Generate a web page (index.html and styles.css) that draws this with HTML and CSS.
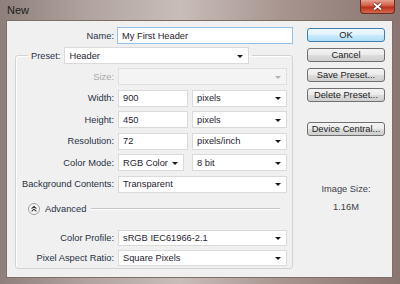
FILE: index.html
```html
<!DOCTYPE html>
<html lang="en">
<head>
    <meta charset="UTF-8">
    <title>New</title>
    <link rel="stylesheet" href="styles.css">
</head>
<body>
    <div class="window">
        <div class="titlebar">
            <span class="title">New</span>
            <button class="close">
                <svg width="11" height="9" viewBox="0 0 11 9"><path d="M2 1.5 L9 7.5 M9 1.5 L2 7.5" stroke="#5a2018" stroke-width="3.2"/><path d="M2 1.5 L9 7.5 M9 1.5 L2 7.5" stroke="#fff" stroke-width="1.8"/></svg>
            </button>
        </div>

        <div class="client">
            <div class="main">
                <div class="name-row">
                    <label>Name:</label>
                    <input class="field name-field" type="text" value="My First Header">
                </div>

                <fieldset class="group">
                    <legend>
                        <span>Preset:</span>
                        <div class="dropdown preset"><select><option>Header</option></select></div>
                    </legend>

                    <div class="rows">
                        <label class="disabled-label">Size:</label>
                        <div class="dropdown disabled"><select disabled><option></option></select></div>

                        <label>Width:</label>
                        <div class="pair">
                            <input class="field short" type="text" value="900">
                            <div class="dropdown unit"><select><option>pixels</option></select></div>
                        </div>

                        <label>Height:</label>
                        <div class="pair">
                            <input class="field short" type="text" value="450">
                            <div class="dropdown unit"><select><option>pixels</option></select></div>
                        </div>

                        <label>Resolution:</label>
                        <div class="pair">
                            <input class="field short" type="text" value="72">
                            <div class="dropdown unit"><select><option>pixels/inch</option></select></div>
                        </div>

                        <label>Color Mode:</label>
                        <div class="pair">
                            <div class="dropdown mode"><select><option>RGB Color</option></select></div>
                            <div class="dropdown unit"><select><option>8 bit</option></select></div>
                        </div>

                        <label>Background Contents:</label>
                        <div class="dropdown"><select><option>Transparent</option></select></div>
                    </div>

                    <div class="advanced">
                        <svg width="12" height="12" viewBox="0 0 12 12"><circle cx="6" cy="6" r="5.5" fill="#f6f6f6" stroke="#a0a0a0"/><path d="M3.6 5.6 L6 3.4 L8.4 5.6 M3.6 8.4 L6 6.2 L8.4 8.4" fill="none" stroke="#333" stroke-width="1.1"/></svg>
                        <span>Advanced</span>
                        <div class="rule"></div>
                    </div>

                    <div class="rows bottom">
                        <label>Color Profile:</label>
                        <div class="dropdown"><select><option>sRGB IEC61966-2.1</option></select></div>

                        <label>Pixel Aspect Ratio:</label>
                        <div class="dropdown"><select><option>Square Pixels</option></select></div>
                    </div>
                </fieldset>
            </div>

            <div class="side">
                <button class="btn default">OK</button>
                <button class="btn">Cancel</button>
                <button class="btn">Save Preset...</button>
                <button class="btn">Delete Preset...</button>
                <button class="btn device">Device Central...</button>
                <div class="image-size">
                    <div>Image Size:</div>
                    <div>1.16M</div>
                </div>
            </div>
        </div>
    </div>
</body>
</html>
```

FILE: styles.css
```css
* {
    box-sizing: border-box;
}
body {
    margin: 0;
    font-family: "Liberation Sans", Arial, sans-serif;
    font-size: 9.3px;
    color: #283044;
    background: #ffffff;
}
.window {
    width: 400px;
    height: 284px;
    display: flex;
    flex-direction: column;
    background: linear-gradient(90deg, #8e7f7a 0%, #b1a4a0 22%, #c8bdb9 45%, #a8958f 70%, #8a7570 100%);
}
.titlebar {
    height: 20px;
    flex-shrink: 0;
    display: flex;
    justify-content: space-between;
    align-items: flex-start;
}
.title {
    font-size: 11px;
    color: #1d1d1d;
    padding: 4px 0 0 7px;
}
.close {
    width: 35px;
    height: 14px;
    margin-right: 5px;
    padding: 0;
    border: 1px solid #6a2c24;
    border-top: none;
    border-radius: 0 0 4px 4px;
    background: linear-gradient(#e6a292, #d4593f 45%, #b8301c 55%, #d8694c);
    display: flex;
    align-items: center;
    justify-content: center;
}
.client {
    flex: 1;
    margin: 0 7px 6px 6px;
    background: #f0f0f0;
    border: 1px solid #7d6e6a;
    display: flex;
}
.main {
    width: 286px;
    flex-shrink: 0;
}
.name-row {
    display: flex;
    align-items: center;
    margin-top: 6px;
    height: 17px;
}
.name-row label {
    width: 107px;
    text-align: right;
    margin-right: 3px;
}
.field {
    height: 100%;
    margin: 0;
    border: 1px solid #dadada;
    background: #ffffff;
    padding: 0 4px;
    font: inherit;
    color: #1f2330;
    outline: none;
}
.name-field {
    width: 176px;
    border-color: #93c1e8;
}
.field.short {
    width: 70px;
}
.group {
    margin: 3px 0 0 8px;
    width: 278px;
    min-width: 0;
    padding: 0 5px 2px 0;
    border: 1px solid #d3d3d3;
    border-radius: 3px;
    box-shadow: inset 1px 1px 0 #ffffff;
}
.group legend {
    margin-left: 12px;
    padding: 0 3px;
    height: 17px;
    display: flex;
    align-items: center;
    gap: 4px;
}
.dropdown {
    position: relative;
    height: 100%;
    background: #ffffff;
    border: 1px solid #dadada;
}
.dropdown select {
    appearance: none;
    -webkit-appearance: none;
    border: none;
    background: transparent;
    width: 100%;
    height: 100%;
    font: inherit;
    color: #1f2330;
    padding: 0 0 0 4px;
    outline: none;
}
.dropdown::after {
    content: "";
    position: absolute;
    right: 5px;
    top: 50%;
    margin-top: -1px;
    border-left: 3px solid transparent;
    border-right: 3px solid transparent;
    border-top: 3px solid #1a1a1a;
}
.dropdown.preset {
    width: 185px;
}
.dropdown.unit {
    width: 95px;
}
.dropdown.mode {
    width: 66px;
}
.dropdown.disabled {
    background: #f4f4f4;
    border-color: #e0e0e0;
}
.dropdown.disabled::after {
    border-top-color: #b0b0b0;
}
.rows {
    display: grid;
    grid-template-columns: 98px 169px;
    column-gap: 4px;
    row-gap: 4.6px;
    grid-auto-rows: 17px;
    align-items: center;
    margin-top: 4px;
}
.rows.bottom {
    margin-top: 15px;
    row-gap: 4px;
    grid-auto-rows: 16px;
}
.rows label {
    text-align: right;
    white-space: nowrap;
}
.rows .disabled-label {
    color: #a8a8a8;
}
.pair {
    height: 100%;
    display: flex;
    justify-content: space-between;
}
.advanced {
    display: flex;
    align-items: center;
    height: 12px;
    margin: 10px 7px 0 12px;
    gap: 5px;
    color: #283044;
}
.advanced .rule {
    flex: 1;
    height: 2px;
    border-top: 1px solid #c6c6c6;
    border-bottom: 1px solid #ffffff;
}
.side {
    display: flex;
    flex-direction: column;
    align-items: flex-start;
    padding-left: 14px;
}
.btn {
    width: 78px;
    height: 14px;
    padding: 0;
    border: 1px solid #707070;
    border-radius: 3px;
    background: linear-gradient(#f4f4f4 0%, #ebebeb 50%, #dddddd 50%, #cfcfcf 100%);
    font: inherit;
    color: #222222;
    line-height: 12px;
    margin-top: 6px;
}
.btn.default {
    margin-top: 7px;
    border-color: #3c7fb1;
    background: linear-gradient(#eef8fe, #dff2fc 50%, #c9ebfd 50%, #b2def6);
}
.btn.device {
    margin-top: 20px;
}
.image-size {
    width: 78px;
    margin-top: 44px;
    text-align: center;
    line-height: 18px;
    color: #3c3f48;
}
```
